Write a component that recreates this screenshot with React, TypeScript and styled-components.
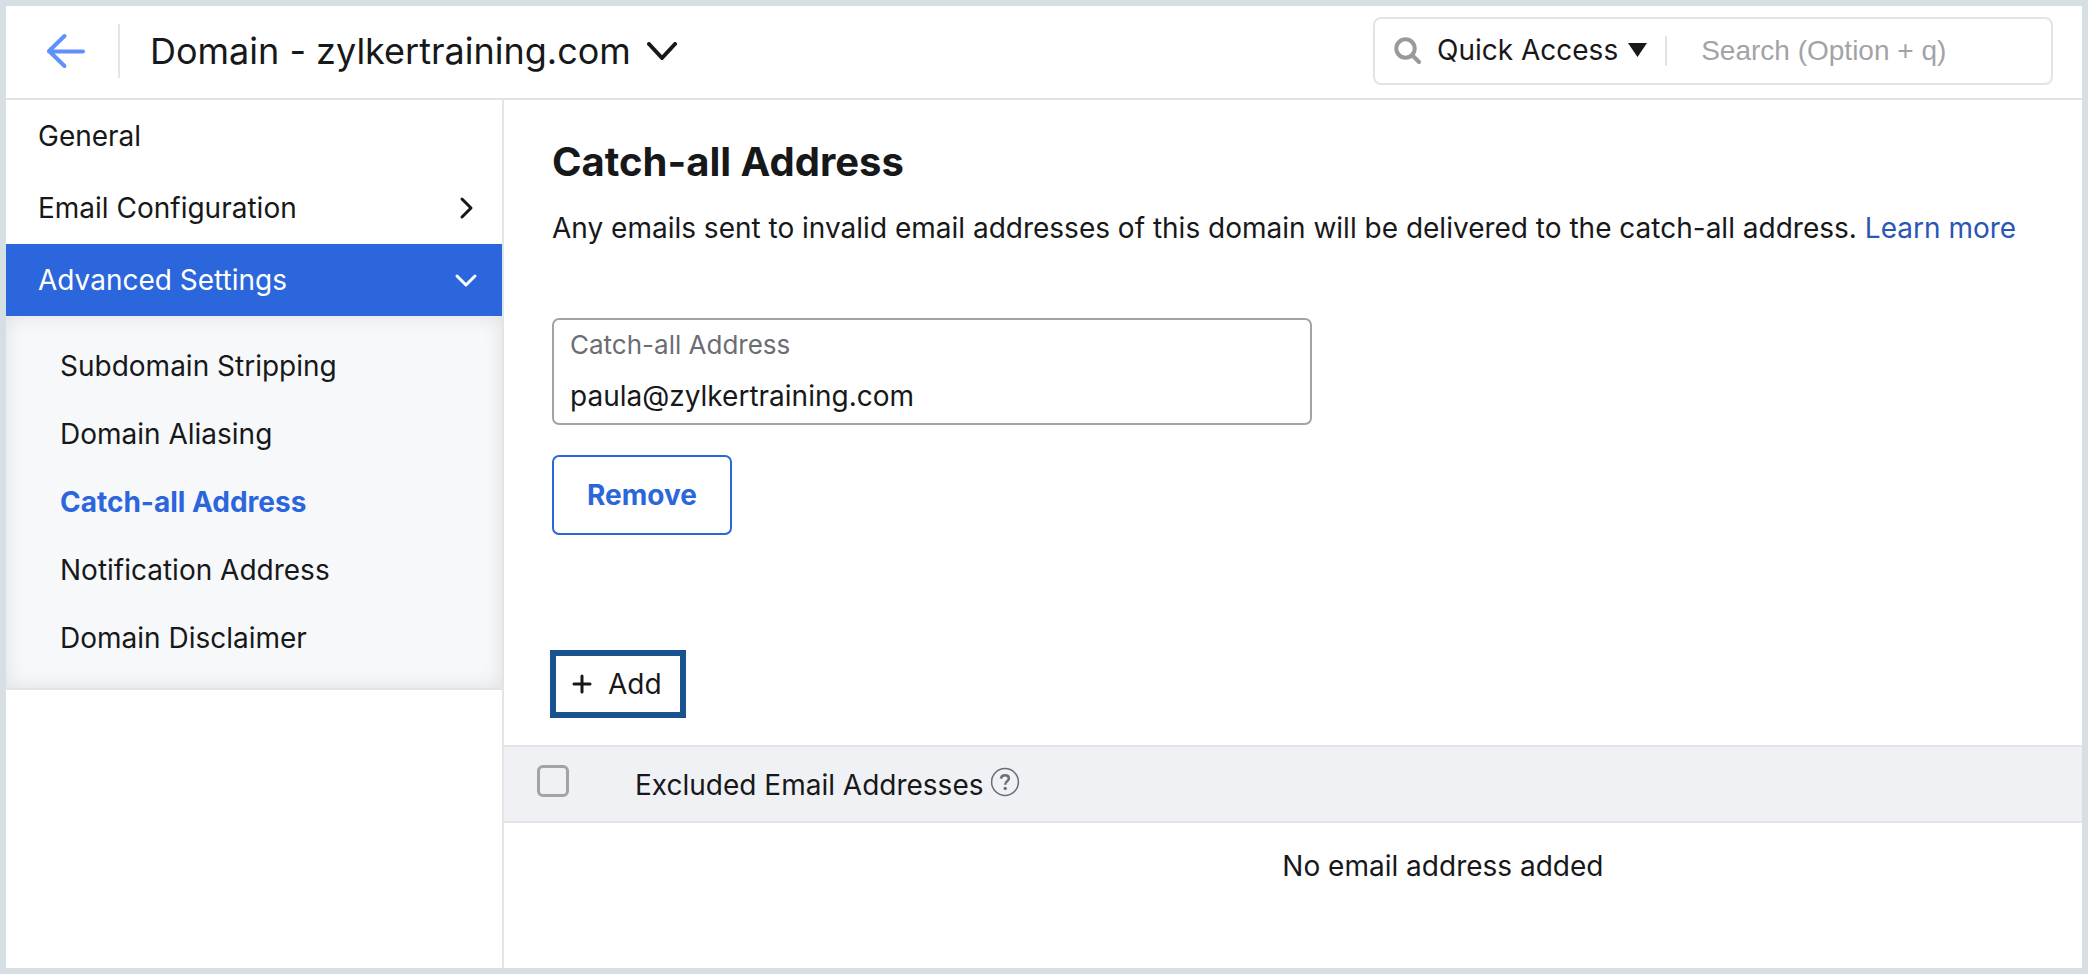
import React, { useState } from "react";
import styled, { createGlobalStyle, css } from "styled-components";

const color = {
  frame: "#d6dfe4",
  ink: "#17181a",
  muted: "#6b6d73",
  line: "#e3e4e6",
  control: "#a2a3a7",
  blue: "#2b66dc",
  link: "#2a56b4",
  focus: "#19528f",
};

const GlobalStyle = createGlobalStyle`
  *, *::before, *::after { box-sizing: border-box; }
  body {
    margin: 0;
    color: ${color.ink};
    font: 400 28px/36px Inter, "Liberation Sans", sans-serif;
  }
  button, input { font: inherit; color: inherit; }
  svg { display: block; flex: none; }
`;

const bareButton = css`
  padding: 0;
  border: 0;
  background: none;
  cursor: pointer;
`;

const Page = styled.div`
  display: flex;
  flex-direction: column;
  min-height: 100vh;
  border: 6px solid ${color.frame};
  background: #fff;
`;

const Header = styled.header`
  display: flex;
  align-items: center;
  justify-content: space-between;
  height: 94px;
  padding: 0 29px 2px 40px;
  border-bottom: 2px solid ${color.line};
`;

const HeaderLeft = styled.div`
  display: flex;
  align-items: center;
  gap: 30px;
`;

const BackButton = styled.button`
  ${bareButton}
`;

const Divider = styled.span<{ $height: number }>`
  flex: none;
  width: 2px;
  height: ${(p) => p.$height}px;
  background: ${color.line};
`;

const DomainButton = styled.button`
  ${bareButton}
  display: flex;
  align-items: center;
  gap: 16px;
  font-size: 36px;
  line-height: 44px;
`;

const SearchBar = styled.form`
  display: flex;
  align-items: center;
  width: 680px;
  height: 68px;
  padding: 0 18px;
  border: 2px solid ${color.line};
  border-radius: 8px;
`;

const QuickAccess = styled.button`
  ${bareButton}
  display: flex;
  align-items: center;
  gap: 10px;
  margin: 0 18px 0 16px;
  padding-bottom: 2px;
  white-space: nowrap;
`;

const SearchInput = styled.input`
  flex: 1;
  min-width: 0;
  padding: 0 0 0 34px;
  border: 0;
  outline: 0;
  background: none;
  font-family: "Liberation Sans", sans-serif;
  &::placeholder { color: ${color.control}; opacity: 1; }
`;

const Body = styled.div`
  display: flex;
  flex: 1;
`;

const Sidebar = styled.nav`
  flex: none;
  width: 498px;
  border-right: 2px solid ${color.line};
`;

const SideItem = styled.button<{ $active?: boolean }>`
  ${bareButton}
  display: flex;
  align-items: center;
  justify-content: space-between;
  width: 100%;
  height: 72px;
  padding: 0 24px 0 32px;
  background: ${(p) => (p.$active ? color.blue : "transparent")};
  color: ${(p) => (p.$active ? "#fff" : color.ink)};
`;

const SubMenu = styled.ul`
  margin: 0;
  padding: 16px 0;
  list-style: none;
  background: #f7f8fa;
  border-bottom: 2px solid ${color.line};
  box-shadow: inset 0 0 20px rgba(0, 0, 0, 0.1);
`;

const SubLink = styled.a<{ $current: boolean }>`
  display: flex;
  align-items: center;
  height: 68px;
  padding-left: 54px;
  text-decoration: none;
  color: ${(p) => (p.$current ? color.blue : color.ink)};
  font-weight: ${(p) => (p.$current ? 700 : 400)};
`;

const Main = styled.main`
  flex: 1;
  min-width: 0;
`;

const Section = styled.section`
  display: flex;
  flex-direction: column;
  align-items: flex-start;
  padding: 38px 48px 0;
`;

const Title = styled.h1`
  margin: 0;
  font-size: 40px;
  line-height: 48px;
  font-weight: 700;
`;

const Description = styled.p`
  margin: 24px 0 0;
`;

const LearnMore = styled.a`
  margin-left: 8px;
  color: ${color.link};
  text-decoration: none;
`;

const Field = styled.div`
  display: flex;
  flex-direction: column;
  justify-content: space-between;
  width: 760px;
  max-width: 100%;
  height: 107px;
  margin-top: 72px;
  padding: 7px 16px 9px;
  border: 2px solid ${color.control};
  border-radius: 7px;
`;

const FieldLabel = styled.label`
  color: ${color.muted};
  font-size: 26px;
`;

const FieldInput = styled.input`
  width: 100%;
  height: 36px;
  padding: 0;
  border: 0;
  outline: 0;
  background: none;
`;

const RemoveButton = styled.button`
  ${bareButton}
  width: 180px;
  height: 80px;
  margin-top: 30px;
  border: 2px solid ${color.blue};
  border-radius: 7px;
  color: ${color.blue};
  font-weight: 700;
`;

const Toolbar = styled.div`
  padding: 115px 46px 27px;
`;

const AddButton = styled.button`
  ${bareButton}
  display: flex;
  align-items: center;
  gap: 16px;
  height: 68px;
  padding: 0 18px 0 16px;
  border: 6px solid ${color.focus};
`;

const Table = styled.table`
  width: 100%;
  border-collapse: separate;
  border-spacing: 0;
`;

const HeadCell = styled.th`
  height: 78px;
  padding: 0;
  border: solid ${color.line};
  border-width: 2px 0;
  background: #f0f1f4;
  text-align: left;
  font-weight: 400;
`;

const CheckCell = styled(HeadCell)`
  width: 131px;
  padding: 18px 0 0 33px;
  vertical-align: top;
`;

const Checkbox = styled.input`
  display: block;
  appearance: none;
  width: 32px;
  height: 32px;
  margin: 0;
  border: 3px solid ${color.control};
  border-radius: 6px;
  &:checked { background: ${color.blue}; }
`;

const HeadLabel = styled.div`
  display: flex;
  align-items: flex-start;
  gap: 6px;
  padding-top: 2px;
`;

const HelpButton = styled.button`
  ${bareButton}
`;

const EmptyCell = styled.td`
  padding: 25px 0 24px 19%;
  text-align: center;
`;

type StrokeProps = { w: number; h: number; d: string; stroke?: string; width?: number };

const Stroke = ({ w, h, d, stroke = "currentColor", width = 3 }: StrokeProps) => (
  <svg
    width={w}
    height={h}
    viewBox={`0 0 ${w} ${h}`}
    fill="none"
    stroke={stroke}
    strokeWidth={width}
    strokeLinecap="round"
    strokeLinejoin="round"
    aria-hidden="true"
  >
    <path d={d} />
  </svg>
);

const SearchIcon = () => (
  <svg width="28" height="28" viewBox="0 0 28 28" fill="none" stroke="#999a9c" strokeWidth="4" strokeLinecap="round" aria-hidden="true">
    <circle cx="12.5" cy="11.5" r="9.2" />
    <path d="M19.5 18.5 L26 25" />
  </svg>
);

const HelpIcon = () => (
  <svg width="30" height="30" viewBox="0 0 30 30" fill="none" stroke={color.muted} aria-hidden="true">
    <circle cx="15" cy="15" r="13.4" strokeWidth="1.5" />
    <path d="M11 11.6 C11.3 9.4 12.9 8.3 15 8.3 C17.3 8.3 18.9 9.6 18.9 11.5 C18.9 14.2 15.2 14.2 15.2 17.8" strokeWidth="2.5" />
    <circle cx="15.2" cy="21.4" r="1.7" fill={color.muted} stroke="none" />
  </svg>
);

const subItems = [
  "Subdomain Stripping",
  "Domain Aliasing",
  "Catch-all Address",
  "Notification Address",
  "Domain Disclaimer",
];

export default function App() {
  const [address, setAddress] = useState("paula@zylkertraining.com");
  const current = "Catch-all Address";

  return (
    <>
      <GlobalStyle />
      <Page>
        <Header>
          <HeaderLeft>
            <BackButton type="button" aria-label="Back">
              <Stroke w={42} h={36} d="M37 18.5 H3 M18.5 3 L3 18 L18.5 33" stroke="#5e91fb" width={4} />
            </BackButton>
            <Divider $height={54} />
            <DomainButton type="button">
              Domain - zylkertraining.com
              <Stroke w={30} h={18} d="M2 2 L15 16 L28 2" width={4} />
            </DomainButton>
          </HeaderLeft>
          <SearchBar role="search" onSubmit={(e) => e.preventDefault()}>
            <SearchIcon />
            <QuickAccess type="button">
              Quick Access
              <svg width="19" height="14" viewBox="0 0 19 14" aria-hidden="true">
                <path d="M0 0 H19 L9.5 14 Z" fill="currentColor" />
              </svg>
            </QuickAccess>
            <Divider $height={30} />
            <SearchInput type="search" aria-label="Search" placeholder="Search (Option + q)" />
          </SearchBar>
        </Header>
        <Body>
          <Sidebar aria-label="Domain settings">
            <SideItem type="button">General</SideItem>
            <SideItem type="button" aria-expanded={false}>
              Email Configuration
              <Stroke w={24} h={24} d="M8 3 L17 12 L8 21" />
            </SideItem>
            <SideItem type="button" aria-expanded $active>
              Advanced Settings
              <Stroke w={24} h={24} d="M3 8 L12 17 L21 8" />
            </SideItem>
            <SubMenu>
              {subItems.map((name) => (
                <li key={name}>
                  <SubLink href="#" $current={name === current} aria-current={name === current ? "page" : undefined}>
                    {name}
                  </SubLink>
                </li>
              ))}
            </SubMenu>
          </Sidebar>
          <Main>
            <Section>
              <Title>Catch-all Address</Title>
              <Description>
                Any emails sent to invalid email addresses of this domain will be delivered to the catch-all address.
                <LearnMore href="#">Learn more</LearnMore>
              </Description>
              <Field>
                <FieldLabel htmlFor="catch-all">Catch-all Address</FieldLabel>
                <FieldInput id="catch-all" type="email" value={address} onChange={(e) => setAddress(e.target.value)} />
              </Field>
              <RemoveButton type="button">Remove</RemoveButton>
            </Section>
            <Toolbar>
              <AddButton type="button">
                <Stroke w={20} h={20} d="M10 2 V18 M2 10 H18" />
                Add
              </AddButton>
            </Toolbar>
            <Table>
              <thead>
                <tr>
                  <CheckCell scope="col">
                    <Checkbox type="checkbox" aria-label="Select all email addresses" />
                  </CheckCell>
                  <HeadCell scope="col">
                    <HeadLabel>
                      Excluded Email Addresses
                      <HelpButton type="button" aria-label="Help">
                        <HelpIcon />
                      </HelpButton>
                    </HeadLabel>
                  </HeadCell>
                </tr>
              </thead>
              <tbody>
                <tr>
                  <EmptyCell colSpan={2}>No email address added</EmptyCell>
                </tr>
              </tbody>
            </Table>
          </Main>
        </Body>
      </Page>
    </>
  );
}
